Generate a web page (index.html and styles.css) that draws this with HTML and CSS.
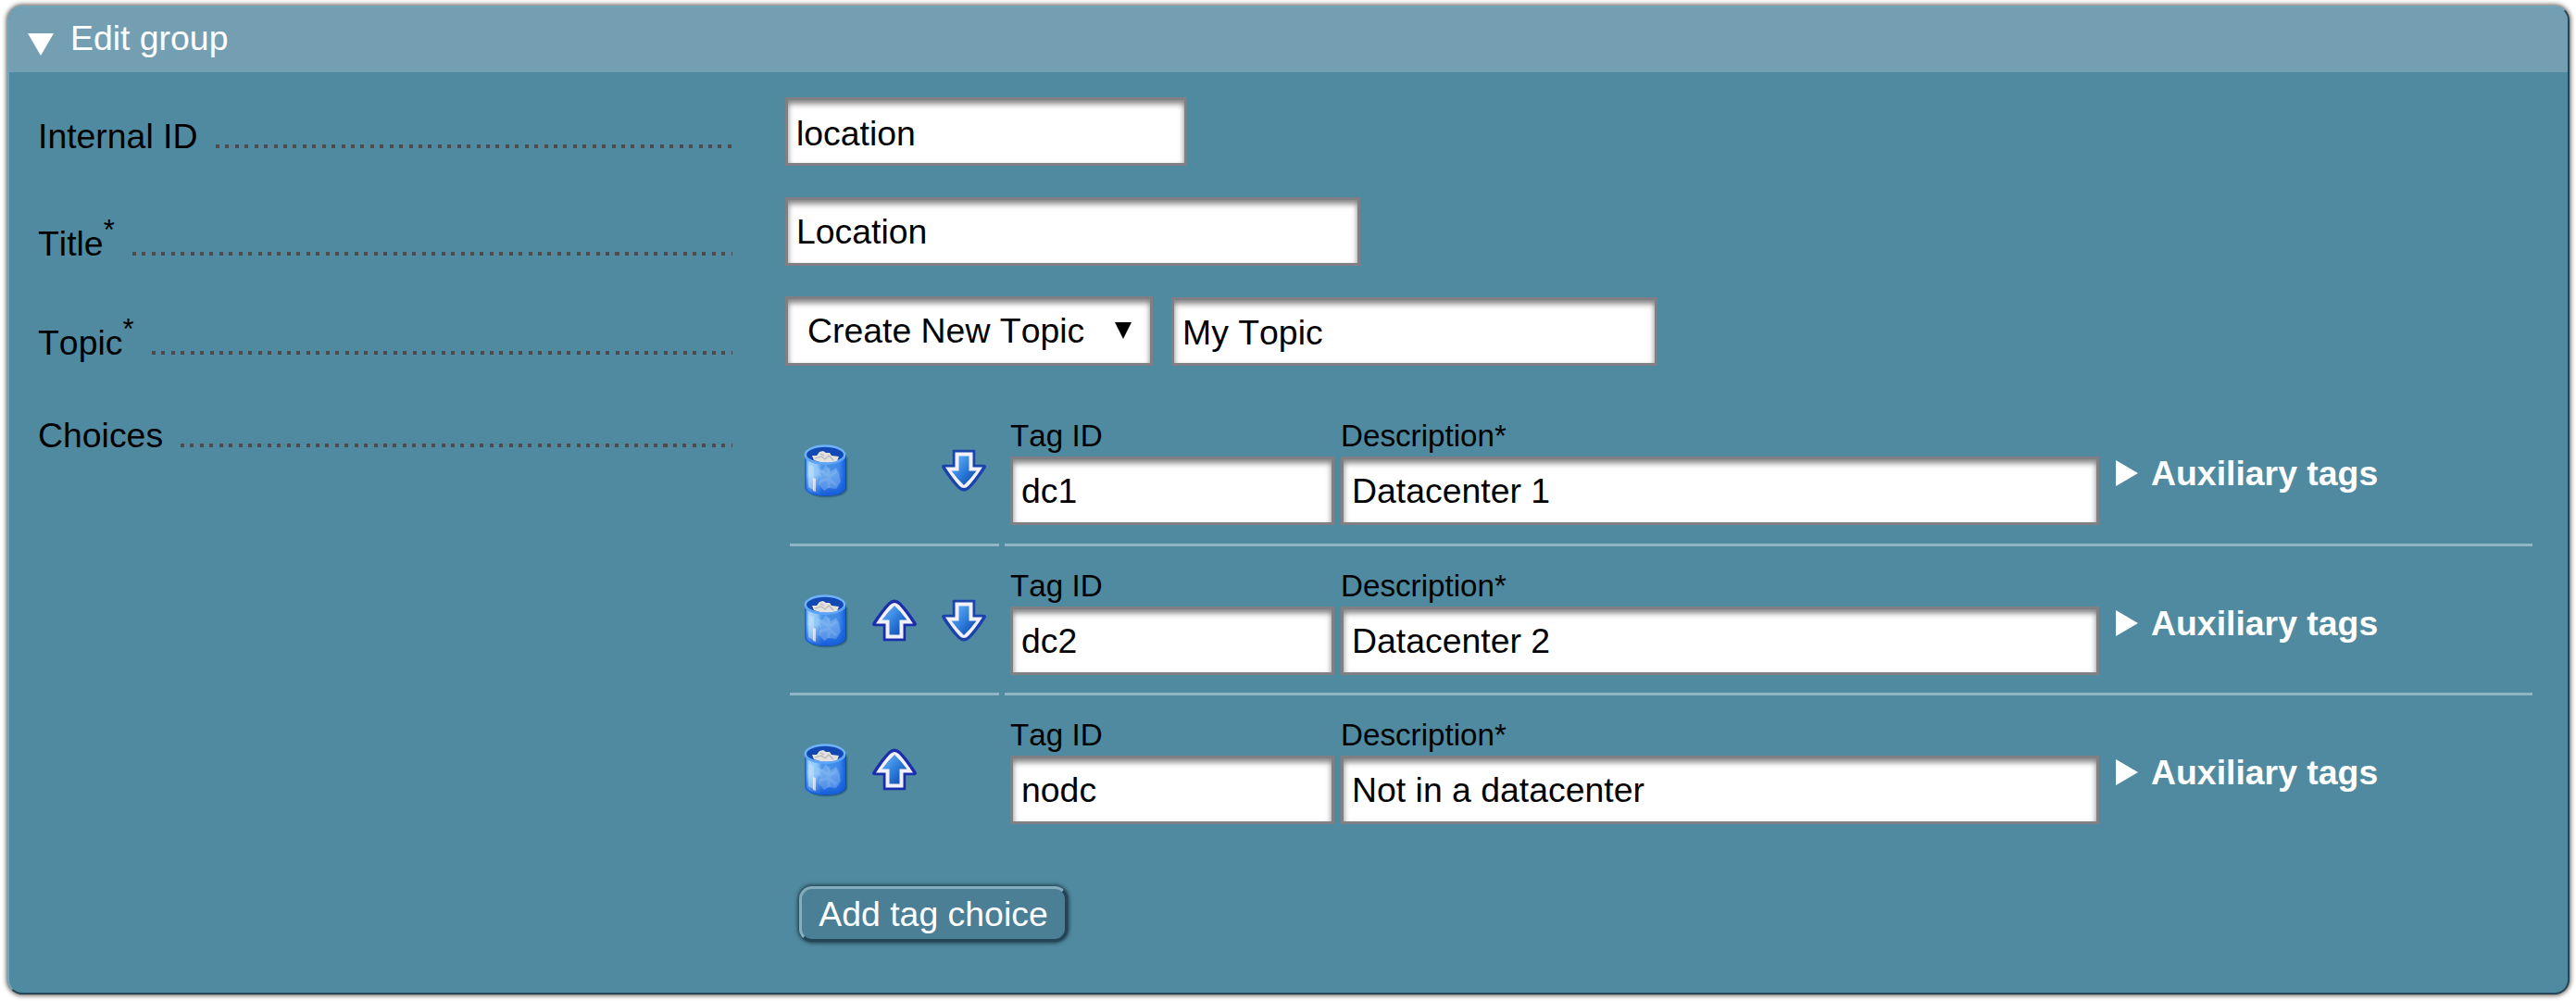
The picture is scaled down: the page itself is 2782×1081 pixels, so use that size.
FILE: index.html
```html
<!DOCTYPE html>
<html lang="en">
<head>
<meta charset="utf-8">
<title>Edit group</title>
<link rel="stylesheet" href="styles.css">
</head>
<body>
<svg class="defs" width="0" height="0" aria-hidden="true">
  <defs>
    <linearGradient id="arrowFill" x1="0" y1="0" x2="1" y2="1">
      <stop offset="0" stop-color="#6cb6fb"/><stop offset=".5" stop-color="#2f7fdc"/><stop offset="1" stop-color="#0a3fa6"/>
    </linearGradient>
    <linearGradient id="canFill" x1="0" y1="0" x2="1" y2="0">
      <stop offset="0" stop-color="#3f8ff0"/><stop offset=".1" stop-color="#a9d6fb"/><stop offset=".3" stop-color="#8cc3f8"/><stop offset=".42" stop-color="#4c96ea"/><stop offset=".85" stop-color="#4088e6"/><stop offset="1" stop-color="#1766e4"/>
    </linearGradient>
    <linearGradient id="canShade" x1="0" y1="0" x2="0" y2="1">
      <stop offset=".5" stop-color="#0a52d8" stop-opacity="0"/><stop offset="1" stop-color="#0a52d8" stop-opacity=".8"/>
    </linearGradient>
    <symbol id="down" viewBox="0 0 50 46">
      <path d="M13.500 1.500H36.500V17.500H46Q49.500 17.500 47.500 20.500Q39 34 31 42Q25 47.500 19 42Q11 34 2.500 20.500Q.5 17.500 4 17.500H13.500Z" fill="#1b43ac" stroke="#1b43ac" stroke-width="1.500" stroke-linejoin="round"/>
      <path d="M15.500 3.500H34.500V19.500H45Q37 32 30 39.500Q25 44.500 20 39.500Q13 32 5 19.500H15.500Z" fill="#f3f1fa"/>
      <path d="M19.500 7.500H30.500V23.500H38.500Q32 32.500 25 39Q18 32.500 11.500 23.500H19.500Z" fill="url(#arrowFill)"/>
    </symbol>
    <symbol id="up" viewBox="0 0 50 46">
      <path d="M13.500 44.500H36.500V28.500H46Q49.500 28.500 47.500 25.500Q39 12 31 4Q25 -1.500 19 4Q11 12 2.500 25.500Q.5 28.500 4 28.500H13.500Z" fill="#1b2fac" stroke="#1b2fac" stroke-width="1.500" stroke-linejoin="round"/>
      <path d="M15.500 42.500H34.500V26.500H45Q37 14 30 6.500Q25 1.500 20 6.500Q13 14 5 26.500H15.500Z" fill="#f3f1fa"/>
      <path d="M19.500 38.500H30.500V22.500H38.500Q32 13.500 25 7Q18 13.500 11.500 22.500H19.500Z" fill="url(#arrowFill)"/>
    </symbol>
    <symbol id="trash" viewBox="0 0 50 60">
      <path d="M4 12V48C4 53 11 57.500 25 57.500S47.500 53 47.500 48V14Z" fill="#123c5a" opacity=".35"/>
      <path d="M3 11V47C3 52 11 56 24 56S46 52 46 47V11Z" fill="#174e8f"/>
      <path d="M1.800 11V45.500C1.800 51.500 10 54.500 23 54.500S44.200 51.500 44.200 45.500V11Z" fill="url(#canFill)"/>
      <path d="M1.800 11V45.500C1.800 51.500 10 54.500 23 54.500S44.200 51.500 44.200 45.500V11Z" fill="url(#canShade)" stroke="#1a62dc" stroke-width="1.600"/>
      <path d="M15 25L20 28 24 22 29 29 35 25 38 31 40 40 35 48 27 47 22 50 16 43 18 36 14 32Z" fill="#b9dafa" opacity=".3"/>
      <path d="M19 28L27 35 36 29M17 40L27 37 35 44M27 25V47" fill="none" stroke="#d3e7fb" stroke-width="3" opacity=".14"/>
      <path d="M5 22Q8 23 11 24V49Q8 48 5 46Z" fill="#bfe2fb" opacity=".55"/>
      <path d="M10 36L13 37V51L10 50Z" fill="#fff" opacity=".65"/>
      <ellipse cx="23" cy="11" rx="21.200" ry="9.500" fill="#1148b2" stroke="#6fb2fb" stroke-width="2.500"/>
      <path d="M9 12L14 12 17 8 21 7 24 9 28 9 30 12 38 13 36 18Q24 22 11 17Z" fill="#e3e2de"/>
      <path d="M12 15L19 13 23 16 27 12 32 17M18 10L22 12" fill="none" stroke="#b9b8b8" stroke-width="1.300"/>
      <path d="M1.800 13Q6 20.500 23 20.500T44.200 13" fill="none" stroke="#5ca5fa" stroke-width="2.500"/>
    </symbol>
  </defs>
</svg>
<main class="panel">
  <header class="panel-header">
    <svg class="toggle" viewBox="0 0 28 24"><path d="M0 0H28L14 24Z" fill="#fff"/></svg>
    <span>Edit group</span>
  </header>
  <div class="form">
    <div class="row">
      <div class="label"><span>Internal ID</span><i class="dots dots-id"></i></div>
      <input class="field id-field" value="location">
    </div>
    <div class="row">
      <div class="label low"><span>Title<b class="req">*</b></span><i class="dots dots-title"></i></div>
      <input class="field title-field" value="Location">
    </div>
    <div class="row">
      <div class="label low"><span>Topic<b class="req">*</b></span><i class="dots dots-topic"></i></div>
      <div class="field select"><span>Create New Topic</span><svg class="caret" viewBox="0 0 18 18"><path d="M0 0H18L9 18Z"/></svg></div>
      <input class="field topic-field" value="My Topic">
    </div>
    <div class="row choices-row">
      <div class="label"><span>Choices</span><i class="dots dots-choices"></i></div>
      <div class="choices">
        <div class="choice">
          <div class="actions"><svg class="trash"><use href="#trash"/></svg><span class="arrow"></span><svg class="arrow"><use href="#down"/></svg></div>
          <div class="details">
            <label class="tag">Tag ID<input class="field" value="dc1"></label>
            <label class="desc">Description*<input class="field" value="Datacenter 1"></label>
            <div class="aux"><svg class="tri" viewBox="0 0 24 28"><path d="M0 0L24 14L0 28Z" fill="#fff"/></svg>Auxiliary tags</div>
          </div>
        </div>
        <div class="choice">
          <div class="actions"><svg class="trash"><use href="#trash"/></svg><svg class="arrow"><use href="#up"/></svg><svg class="arrow"><use href="#down"/></svg></div>
          <div class="details">
            <label class="tag">Tag ID<input class="field" value="dc2"></label>
            <label class="desc">Description*<input class="field" value="Datacenter 2"></label>
            <div class="aux"><svg class="tri" viewBox="0 0 24 28"><path d="M0 0L24 14L0 28Z" fill="#fff"/></svg>Auxiliary tags</div>
          </div>
        </div>
        <div class="choice">
          <div class="actions"><svg class="trash"><use href="#trash"/></svg><svg class="arrow"><use href="#up"/></svg></div>
          <div class="details">
            <label class="tag">Tag ID<input class="field" value="nodc"></label>
            <label class="desc">Description*<input class="field" value="Not in a datacenter"></label>
            <div class="aux"><svg class="tri" viewBox="0 0 24 28"><path d="M0 0L24 14L0 28Z" fill="#fff"/></svg>Auxiliary tags</div>
          </div>
        </div>
        <button class="add">Add tag choice</button>
      </div>
    </div>
  </div>
</main>
</body>
</html>
```
FILE: styles.css
```css
* { box-sizing: border-box; }
body {
  margin: 0;
  padding: 6px 7px 6px 8px;
  height: 1081px;
  overflow: hidden;
  background: #fff;
  font: 37.4px/44px "Liberation Sans", Arial, sans-serif;
  font-kerning: none;
  color: #000;
}
.defs { position: absolute; }
.panel {
  height: 1068px;
  border: 2px solid;
  border-color: #72a5b8 #234556 #234556 #72a5b8;
  border-radius: 16px;
  background: #508aa0;
  box-shadow: 0 0 5px 1px rgba(40, 25, 20, .75);
  overflow: hidden;
}
.panel-header {
  display: flex;
  align-items: flex-start;
  gap: 18px;
  height: 70px;
  padding: 11px 20px 0;
  background: #749fb3;
  color: #fff;
}
.toggle { width: 28px; height: 24px; margin-top: 17px; }
.form { padding: 27px 0 0 31px; }
.row { display: flex; align-items: flex-start; height: 107.500px; }
.label {
  display: flex;
  justify-content: space-between;
  width: 750px;
  margin-right: 57px;
  padding-top: 20px;
}
.label.low { padding-top: 28px; }
.label span { white-space: nowrap; }
.req { font-weight: 400; font-size: 31px; line-height: 0; position: relative; top: -17px; }
.dots {
  height: 4px;
  margin-top: 31px;
  background: repeating-linear-gradient(90deg, #514a4c 0 4px, transparent 4px 10.430px);
}
.dots-id { width: 558px; }
.dots-title { width: 648px; }
.dots-topic { width: 627px; }
.dots-choices { width: 596px; }
.field {
  display: block;
  height: 74px;
  margin: 0;
  padding: 2px 9px 0;
  border: 3px solid #807f84;
  border-radius: 0;
  outline: 0;
  background: #fff;
  box-shadow: inset 0 4px 6px rgba(0, 0, 0, .5);
  font: inherit;
  font-size: 37.4px;
  font-kerning: none;
  color: #000;
}
.id-field { width: 434px; padding-top: 4px; }
.title-field { width: 621px; }
.select {
  display: flex;
  justify-content: space-between;
  align-items: flex-start;
  width: 397px;
  height: 75px;
  padding: 12px 20px 0 21px;
}
.caret { width: 18px; height: 18px; margin-top: 13px; }
.topic-field { width: 525px; margin: 1px 0 0 20px; }
.choices-row { height: auto; }
.choices { margin-left: 5px; }
.choice { display: flex; gap: 6px; height: 161.300px; }
.choice:first-child { height: 162px; }
.actions, .details { display: flex; border-bottom: 3px solid #90b5c7; }
.choice:nth-child(3) > div { border-color: transparent; }
.actions { width: 226px; padding: 52px 0 0 15px; }
.trash { width: 50px; height: 60px; margin-right: 23px; }
.arrow { width: 50px; height: 46px; margin: 5px 25px 0 0; flex: none; }
.arrow:last-child { margin-right: 0; }
.details { width: 1650px; padding: 23px 0 0 6px; }
.tag, .desc { font-size: 33.2px; line-height: 40px; }
.tag { width: 350px; margin-right: 7px; }
.desc { width: 819px; }
.tag .field, .desc .field { width: 100%; margin-top: 2px; }
.aux {
  display: flex;
  gap: 14px;
  margin: 38px 0 0 18px;
  font-weight: 700;
  color: #fff;
}
.tri { width: 24px; height: 28px; margin-top: 8px; }
.add {
  display: block;
  width: 290px;
  height: 60px;
  margin: 45px 0 0 10px;
  padding: 0;
  border: 3px solid;
  border-color: #85adbd #234556 #234556 #85adbd;
  border-radius: 14px;
  background: #4a7f96;
  box-shadow: 0 0 4px 1px rgba(10, 30, 42, .85);
  font: inherit;
  font-kerning: none;
  color: #fff;
}
```
